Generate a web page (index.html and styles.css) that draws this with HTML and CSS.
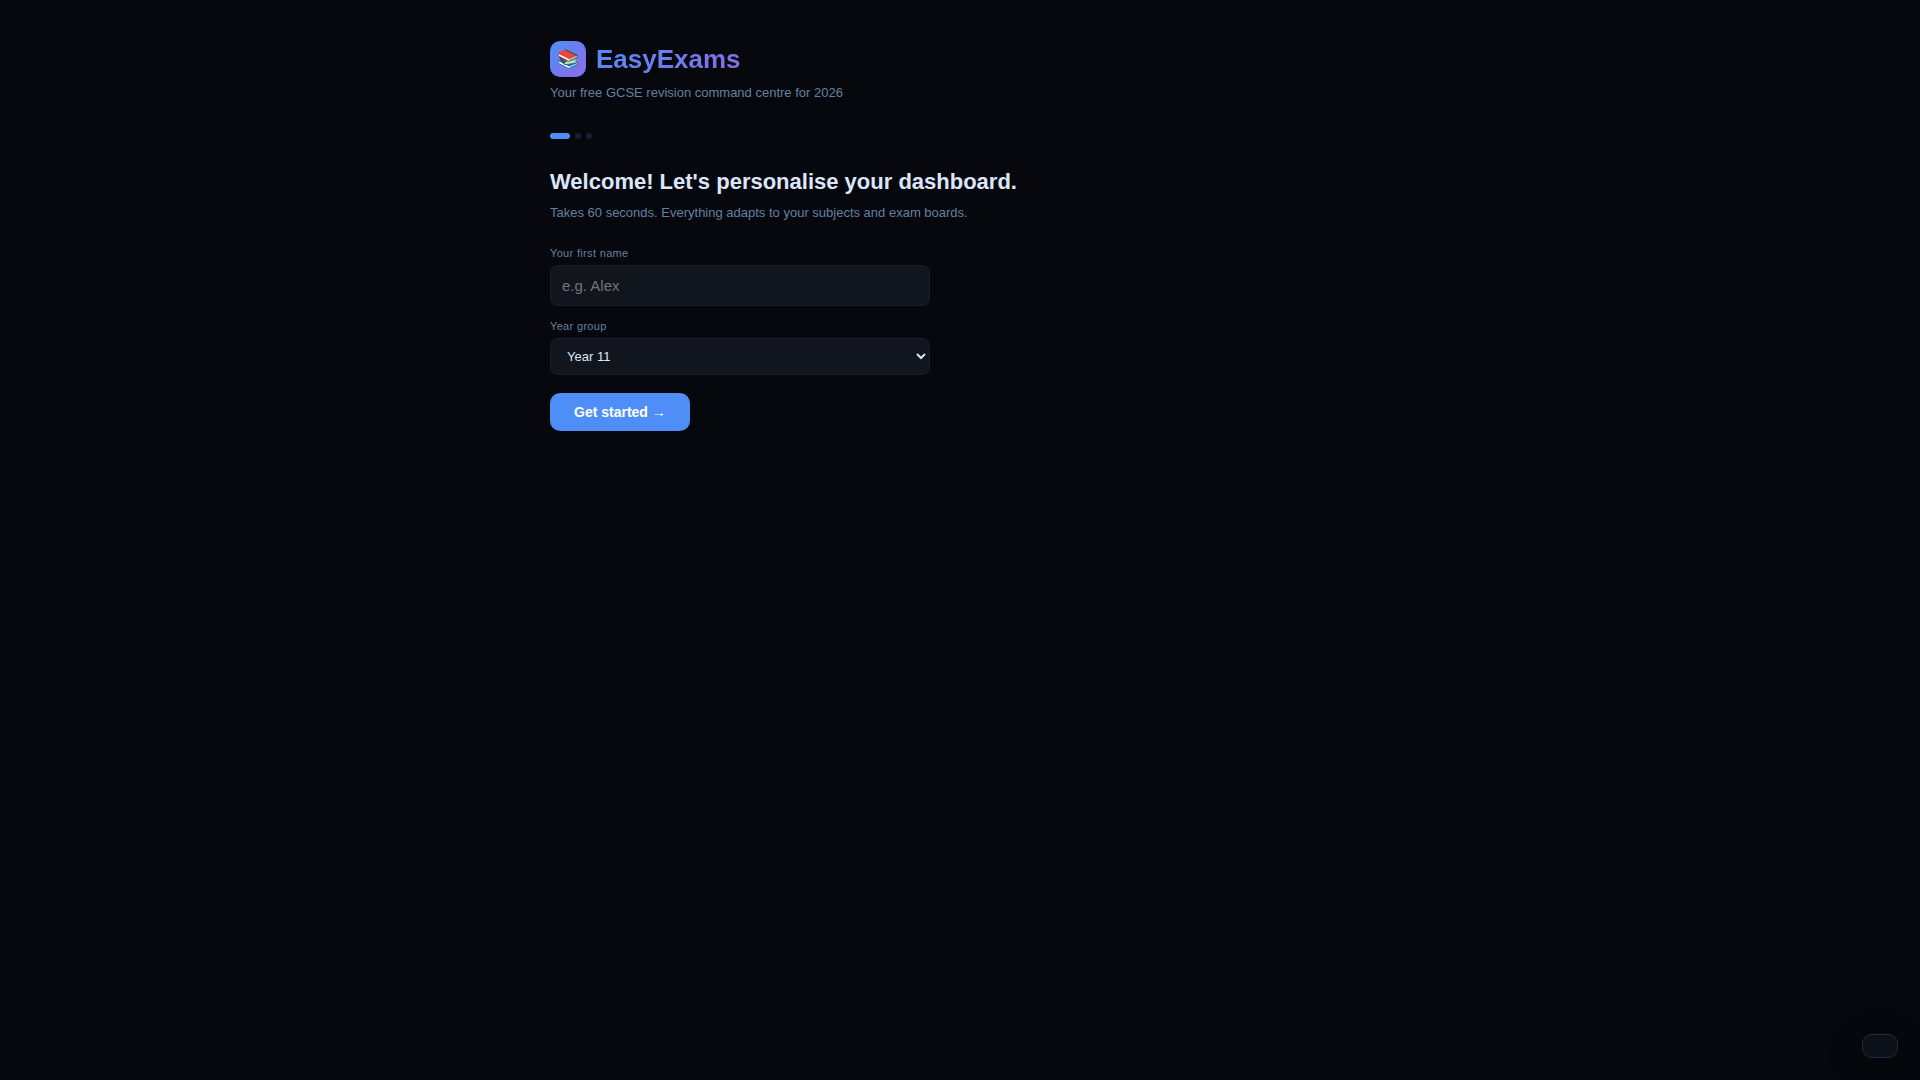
FILE: index.html
```html
<!DOCTYPE html>
<html lang="en">
<head>
<meta charset="utf-8">
<meta name="viewport" content="width=device-width, initial-scale=1">
<title>EasyExams</title>
<link rel="stylesheet" href="styles.css">
</head>
<body>
<main class="setup">
  <header class="brand">
    <div class="brand-row">
      <span class="brand-icon" aria-hidden="true">📚</span>
      <span class="brand-name">EasyExams</span>
    </div>
    <p class="tagline">Your free GCSE revision command centre for 2026</p>
  </header>
  <div class="steps" aria-hidden="true">
    <span class="step step-active"></span>
    <span class="step"></span>
    <span class="step"></span>
  </div>
  <h1 class="title">Welcome! Let's personalise your dashboard.</h1>
  <p class="subtitle">Takes 60 seconds. Everything adapts to your subjects and exam boards.</p>
  <form class="form">
    <label class="label" for="name">Your first name</label>
    <input class="field field-text" id="name" type="text" placeholder="e.g. Alex">
    <label class="label" for="year">Year group</label>
    <select class="field field-select" id="year">
      <option>Year 10</option>
      <option selected>Year 11</option>
    </select>
    <button class="button" type="button">Get started →</button>
  </form>
</main>
<div class="toast" role="status"></div>
</body>
</html>
```

FILE: styles.css
```css
* { box-sizing: border-box; margin: 0; padding: 0; }

body {
  min-height: 100vh;
  background: #06080d;
  color: #dce6fa;
  font-family: "Liberation Sans", Arial, sans-serif;
  font-size: 14px;
  line-height: 21px;
}

.setup { max-width: 860px; margin: 0 auto; padding: 40px 20px; }

.brand { margin-bottom: 30px; }
.brand-row { display: flex; align-items: center; gap: 10px; margin-bottom: 4px; }
.brand-icon {
  display: flex;
  align-items: center;
  justify-content: center;
  width: 36px;
  height: 36px;
  border-radius: 10px;
  background: linear-gradient(135deg, #4f8ef7, #8b6be8);
  font-size: 18px;
}
.brand-name {
  background: linear-gradient(135deg, #4f8ef7, #8b6be8);
  background-clip: text;
  -webkit-background-clip: text;
  color: transparent;
  font-size: 26px;
  font-weight: 700;
  line-height: 38px;
}
.tagline { color: #6480a0; font-size: 13px; }

.steps { display: flex; gap: 5px; margin-bottom: 26px; }
.step { width: 6px; height: 6px; border-radius: 3px; background: #182030; }
.step-active { width: 20px; background: #4f8ef7; }

.title { margin-bottom: 4px; font-size: 22px; line-height: 33px; }
.subtitle { margin-bottom: 22px; color: #6480a0; font-size: 13px; }

.form { display: flex; flex-direction: column; align-items: flex-start; max-width: 380px; }
.label { margin-bottom: 4px; color: #6480a0; font-size: 11px; line-height: 16px; letter-spacing: 0.03em; }
.field {
  width: 100%;
  border: 1px solid #182030;
  border-radius: 8px;
  background: #11151e;
  color: #dce6fa;
  font-family: inherit;
}
.field-text { height: 41px; margin-bottom: 12px; padding: 0 11px; font-size: 15px; }
.field-select { height: 37px; margin-bottom: 18px; padding: 0 12px; font-size: 13px; }
.button {
  padding: 11px 24px;
  border: 0;
  border-radius: 10px;
  background: #4f8ef7;
  color: #fff;
  font: 700 14px/16px "Liberation Sans", Arial, sans-serif;
}

.toast {
  position: fixed;
  right: 22px;
  bottom: 22px;
  width: 36px;
  height: 24px;
  border: 1px solid #1e2c44;
  border-radius: 10px;
  background: #0c1018;
  box-shadow: 0 8px 32px rgba(0, 0, 0, 0.4);
}
```
